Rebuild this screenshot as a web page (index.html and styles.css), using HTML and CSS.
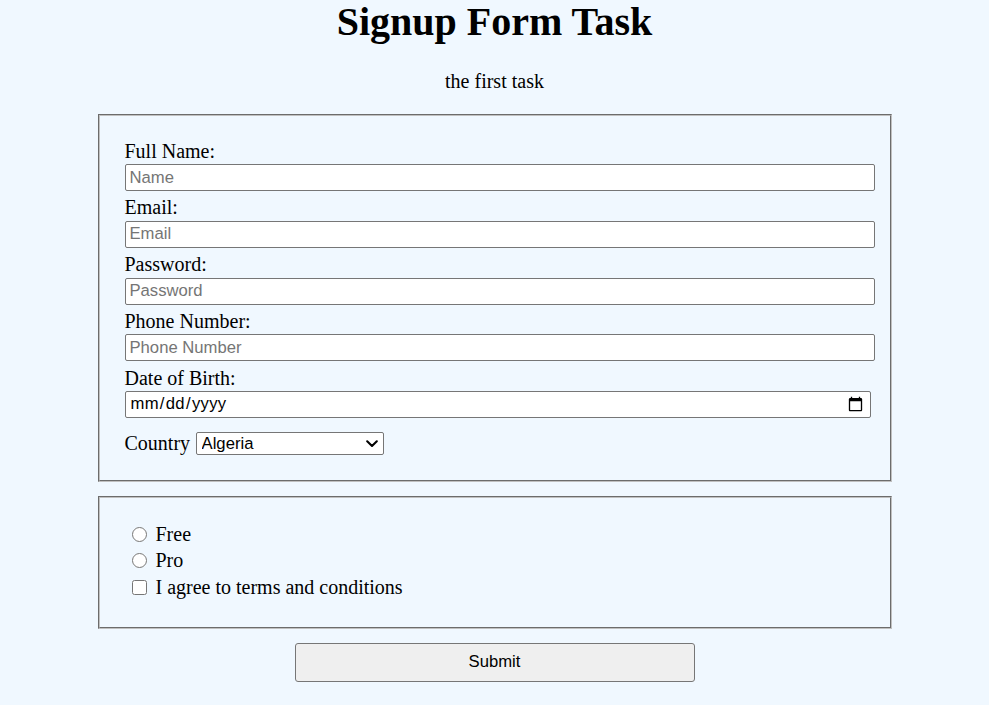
FILE: index.html
```html
<!DOCTYPE html>
<html lang="en">
<head>
<meta charset="utf-8">
<title>Signup Form Task</title>
<link rel="stylesheet" href="styles.css">
</head>
<body>
<h1 class="title">Signup Form Task</h1>
<p class="subtitle">the first task</p>
<form class="form">
  <fieldset class="box box-fields">
    <div class="field">
      <label class="field-label" for="name">Full Name:</label>
      <input class="text-input" type="text" id="name" placeholder="Name">
    </div>
    <div class="field">
      <label class="field-label" for="email">Email:</label>
      <input class="text-input" type="email" id="email" placeholder="Email">
    </div>
    <div class="field">
      <label class="field-label" for="password">Password:</label>
      <input class="text-input" type="password" id="password" placeholder="Password">
    </div>
    <div class="field">
      <label class="field-label" for="phone">Phone Number:</label>
      <input class="text-input" type="tel" id="phone" placeholder="Phone Number">
    </div>
    <div class="field">
      <label class="field-label" for="dob">Date of Birth:</label>
      <input class="date-input" type="date" id="dob">
    </div>
    <div class="country-row">
      <label class="country-label" for="country">Country</label>
      <span class="select-wrap">
        <select class="country-select" id="country">
          <option>Algeria</option>
          <option>Egypt</option>
          <option>Morocco</option>
          <option>Tunisia</option>
        </select>
        <svg class="select-arrow" width="12" height="8" viewBox="0 0 12 8" aria-hidden="true"><path d="M1.2 1.3 L6 6 L10.8 1.3" fill="none" stroke="#000" stroke-width="2.1" stroke-linecap="round" stroke-linejoin="round"/></svg>
      </span>
    </div>
  </fieldset>
  <fieldset class="box box-options">
    <label class="option"><input class="option-input" type="radio" name="plan"> Free</label>
    <label class="option"><input class="option-input" type="radio" name="plan"> Pro</label>
    <label class="option"><input class="option-input" type="checkbox"> I agree to terms and conditions</label>
  </fieldset>
  <div class="actions">
    <button class="submit" type="submit">Submit</button>
  </div>
</form>
</body>
</html>
```
FILE: styles.css
```css
html, body {
  margin: 0;
  padding: 0;
}
body {
  background: #f0f8ff;
  font-family: "Liberation Serif", "Times New Roman", serif;
  font-size: 20px;
  color: #000;
}
.title {
  margin: 0;
  font-size: 40px;
  font-weight: bold;
  text-align: center;
  line-height: 44px;
}
.subtitle {
  margin: 26px 0 0;
  text-align: center;
  line-height: 23px;
}
.form {
  display: flex;
  flex-direction: column;
  align-items: center;
  margin-top: 21px;
}
.box {
  box-sizing: border-box;
  width: 794px;
  margin: 0;
  border: 2px groove #c0c0c0;
}
.box-fields {
  padding: 23.5px 15px 25px 25px;
  display: flex;
  flex-direction: column;
}
.field {
  display: flex;
  flex-direction: column;
  align-items: flex-start;
  margin-bottom: 5.25px;
}
.field-label {
  line-height: 23px;
  margin-bottom: 1.5px;
}
.text-input {
  box-sizing: border-box;
  width: 750px;
  height: 27px;
  margin: 0;
  padding: 1px 4px;
  border: 1px solid #767676;
  border-radius: 2px;
  background: #fff;
  font-family: "Liberation Sans", Arial, sans-serif;
  font-size: 16.67px;
  color: #000;
}
.text-input::placeholder {
  color: #757575;
}
.date-input {
  box-sizing: border-box;
  width: 746px;
  height: 26.5px;
  margin: 0;
  padding: 1px 4px;
  border: 1px solid #767676;
  border-radius: 2px;
  background: #fff;
  font-family: "Liberation Sans", Arial, sans-serif;
  font-size: 16.67px;
  letter-spacing: 0.3px;
  color: #000;
}
.country-row {
  display: flex;
  align-items: center;
  gap: 5.5px;
  margin-top: 9px;
}
.country-label {
  line-height: 23px;
}
.select-wrap {
  position: relative;
  display: inline-flex;
}
.country-select {
  box-sizing: border-box;
  width: 188px;
  height: 23px;
  margin: 0;
  padding: 0 20px 0 5px;
  border: 1px solid #767676;
  border-radius: 2px;
  background: #fff;
  font-family: "Liberation Sans", Arial, sans-serif;
  font-size: 16.67px;
  color: #000;
  -webkit-appearance: none;
  appearance: none;
}
.select-arrow {
  position: absolute;
  right: 6px;
  top: 8px;
  pointer-events: none;
}
.box-options {
  margin-top: 14px;
  padding: 23px 15px 26px 32px;
  display: flex;
  flex-direction: column;
}
.option {
  display: flex;
  align-items: center;
  height: 26.67px;
  gap: 9px;
  line-height: 23px;
}
.option-input {
  width: 15px;
  height: 15px;
  margin: 0;
}
.actions {
  margin-top: 14px;
}
.submit {
  box-sizing: border-box;
  width: 400px;
  height: 39.5px;
  margin: 0;
  padding: 0;
  border: 1px solid #767676;
  border-radius: 3px;
  background: #efefef;
  font-family: "Liberation Sans", Arial, sans-serif;
  font-size: 16.67px;
  color: #000;
}
```
